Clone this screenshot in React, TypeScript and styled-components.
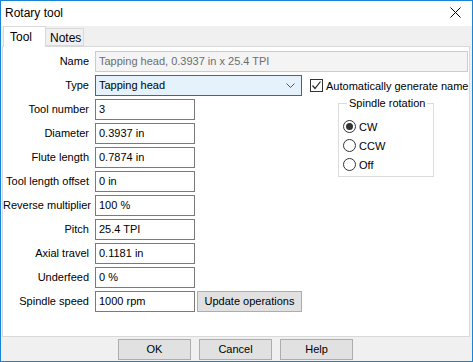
import React from "react";
import styled, { createGlobalStyle } from "styled-components";

const GlobalStyle = createGlobalStyle`
  body {
    margin: 0;
    font-family: "Segoe UI", "Liberation Sans", Arial, sans-serif;
    font-size: 11px;
    color: #000;
  }
`;

interface FieldRow {
    label: string;
    value: string;
}

const rows: FieldRow[] = [
    { label: "Tool number", value: "3" },
    { label: "Diameter", value: "0.3937 in" },
    { label: "Flute length", value: "0.7874 in" },
    { label: "Tool length offset", value: "0 in" },
    { label: "Reverse multiplier", value: "100 %" },
    { label: "Pitch", value: "25.4 TPI" },
    { label: "Axial travel", value: "0.1181 in" },
    { label: "Underfeed", value: "0 %" },
];

const radios = [
    { label: "CW", checked: true },
    { label: "CCW", checked: false },
    { label: "Off", checked: false },
];

const App: React.FC = () => {
    return (
        <>
            <GlobalStyle />
            <Window>
                <TitleBar>
                    <Title>Rotary tool</Title>
                    <CloseButton>
                        <svg width="11" height="11" viewBox="0 0 11 11">
                            <path d="M0.5 0.5 L10.5 10.5 M10.5 0.5 L0.5 10.5" stroke="#000" strokeWidth="1" />
                        </svg>
                    </CloseButton>
                </TitleBar>

                <TabStrip>
                    <Tab $active>Tool</Tab>
                    <Tab>Notes</Tab>
                </TabStrip>

                <Panel>
                    <FormGrid>
                        <Label>Name</Label>
                        <NameField>Tapping head, 0.3937 in x 25.4 TPI</NameField>

                        <Label>Type</Label>
                        <Select>
                            <span>Tapping head</span>
                            <svg width="9" height="5" viewBox="0 0 9 5">
                                <path d="M0.5 0.5 L4.5 4.5 L8.5 0.5" stroke="#555" strokeWidth="1" fill="none" />
                            </svg>
                        </Select>
                        <CheckRow>
                            <CheckBox>
                                <svg width="11" height="11" viewBox="0 0 11 11">
                                    <path d="M1.5 5.5 L4 8.5 L9.5 1.5" stroke="#222" strokeWidth="1.2" fill="none" />
                                </svg>
                            </CheckBox>
                            <span>Automatically generate name</span>
                        </CheckRow>

                        {rows.map((row, i) => (
                            <React.Fragment key={row.label}>
                                <Label style={{ gridRow: i + 3 }}>{row.label}</Label>
                                <TextField style={{ gridRow: i + 3 }}>{row.value}</TextField>
                            </React.Fragment>
                        ))}

                        <GroupBox>
                            <Legend>Spindle rotation</Legend>
                            {radios.map((r) => (
                                <RadioRow key={r.label}>
                                    <RadioCircle $checked={r.checked} />
                                    <span>{r.label}</span>
                                </RadioRow>
                            ))}
                        </GroupBox>

                        <Label>Spindle speed</Label>
                        <SpeedRow>
                            <TextField>1000 rpm</TextField>
                            <UpdateButton>Update operations</UpdateButton>
                        </SpeedRow>
                    </FormGrid>
                </Panel>

                <Footer>
                    <DialogButton>OK</DialogButton>
                    <DialogButton>Cancel</DialogButton>
                    <DialogButton>Help</DialogButton>
                </Footer>
            </Window>
        </>
    );
};

const Window = styled.div`
  width: 473px;
  height: 362px;
  box-sizing: border-box;
  border: 1px solid #1883d7;
  background: #f0f0f0;
  display: flex;
  flex-direction: column;
  overflow: hidden;
`;

const TitleBar = styled.div`
  height: 25px;
  flex-shrink: 0;
  background: #fff;
  display: flex;
  align-items: center;
  justify-content: space-between;
  padding-left: 4px;
`;

const Title = styled.div`
  font-size: 12px;
  padding-bottom: 2px;
`;

const CloseButton = styled.div`
  width: 46px;
  height: 25px;
  display: flex;
  align-items: center;
  justify-content: center;
  margin-right: -6px;
  padding-bottom: 2px;
`;

const TabStrip = styled.div`
  height: 20px;
  flex-shrink: 0;
  display: flex;
  align-items: flex-end;
  padding-left: 2px;
  position: relative;
  z-index: 1;
`;

const Tab = styled.div<{ $active?: boolean }>`
  box-sizing: border-box;
  height: ${(p) => (p.$active ? "21px" : "18px")};
  margin-bottom: ${(p) => (p.$active ? "-1px" : "0")};
  padding: ${(p) => (p.$active ? "3px 6px 0 6px" : "2px 4px 0 4px")};
  width: ${(p) => (p.$active ? "43px" : "38px")};
  font-size: 12px;
  background: ${(p) => (p.$active ? "#fff" : "#f0f0f0")};
  border: 1px solid #d9d9d9;
  border-bottom: ${(p) => (p.$active ? "none" : "1px solid #d9d9d9")};
  border-left: ${(p) => (p.$active ? "1px solid #d9d9d9" : "none")};
`;

const Panel = styled.div`
  flex: 1;
  margin: 0 2px 0 1px;
  background: #fff;
  border: 1px solid #d9d9d9;
  padding: 4px 5px 0 0;
`;

const FormGrid = styled.div`
  display: grid;
  grid-template-columns: 86px 207px 1fr;
  grid-template-rows: repeat(11, 21px);
  column-gap: 6px;
  row-gap: 3px;
`;

const Label = styled.div`
  grid-column: 1;
  text-align: right;
  align-self: center;
  white-space: nowrap;
  padding-bottom: 1px;
`;

const FieldBase = styled.div`
  box-sizing: border-box;
  height: 21px;
  display: flex;
  align-items: center;
  padding: 0 3px 1px 3px;
  white-space: nowrap;
`;

const NameField = styled(FieldBase)`
  grid-column: 2 / span 2;
  background: #f4f4f4;
  border: 1px solid #cccccc;
  color: #6d6d6d;
`;

const Select = styled(FieldBase)`
  grid-column: 2;
  background: #e5f1fb;
  border: 1px solid #0078d7;
  justify-content: space-between;
  padding-right: 6px;
`;

const TextField = styled(FieldBase)`
  grid-column: 2;
  justify-self: start;
  width: 100px;
  background: #fff;
  border: 1px solid #7a7a7a;
`;

const CheckRow = styled.div`
  grid-column: 3;
  grid-row: 2;
  display: flex;
  align-items: center;
  gap: 3px;
  margin-left: 2px;
  white-space: nowrap;
`;

const CheckBox = styled.div`
  box-sizing: border-box;
  width: 13px;
  height: 13px;
  border: 1px solid #333;
  background: #fff;
  display: flex;
  align-items: center;
  justify-content: center;
`;

const GroupBox = styled.fieldset`
  grid-column: 3;
  grid-row: 3 / span 4;
  align-self: start;
  margin: -3px 0 0 30px;
  width: 96px;
  box-sizing: border-box;
  border: 1px solid #dcdcdc;
  padding: 7px 0 2px 4px;
`;

const Legend = styled.legend`
  padding: 0 2px;
  margin-left: 4px;
  line-height: 14px;
  white-space: nowrap;
`;

const RadioRow = styled.div`
  height: 19px;
  display: flex;
  align-items: center;
  gap: 3px;
`;

const RadioCircle = styled.div<{ $checked?: boolean }>`
  box-sizing: border-box;
  width: 13px;
  height: 13px;
  border-radius: 50%;
  border: 1px solid #333;
  background: #fff;
  display: flex;
  align-items: center;
  justify-content: center;

  &::after {
    content: "";
    display: ${(p) => (p.$checked ? "block" : "none")};
    width: 7px;
    height: 7px;
    border-radius: 50%;
    background: #333;
  }
`;

const SpeedRow = styled.div`
  grid-column: 2;
  display: flex;
  gap: 2px;
`;

const ButtonBase = styled.div`
  box-sizing: border-box;
  height: 21px;
  background: #e1e1e1;
  border: 1px solid #adadad;
  display: flex;
  align-items: center;
  justify-content: center;
  padding-bottom: 1px;
  white-space: nowrap;
`;

const UpdateButton = styled(ButtonBase)`
  width: 105px;
`;

const Footer = styled.div`
  height: 24px;
  flex-shrink: 0;
  display: flex;
  gap: 8px;
  padding: 2px 0 0 117px;
  box-sizing: border-box;
`;

const DialogButton = styled(ButtonBase)`
  width: 73px;
`;

export default App;
